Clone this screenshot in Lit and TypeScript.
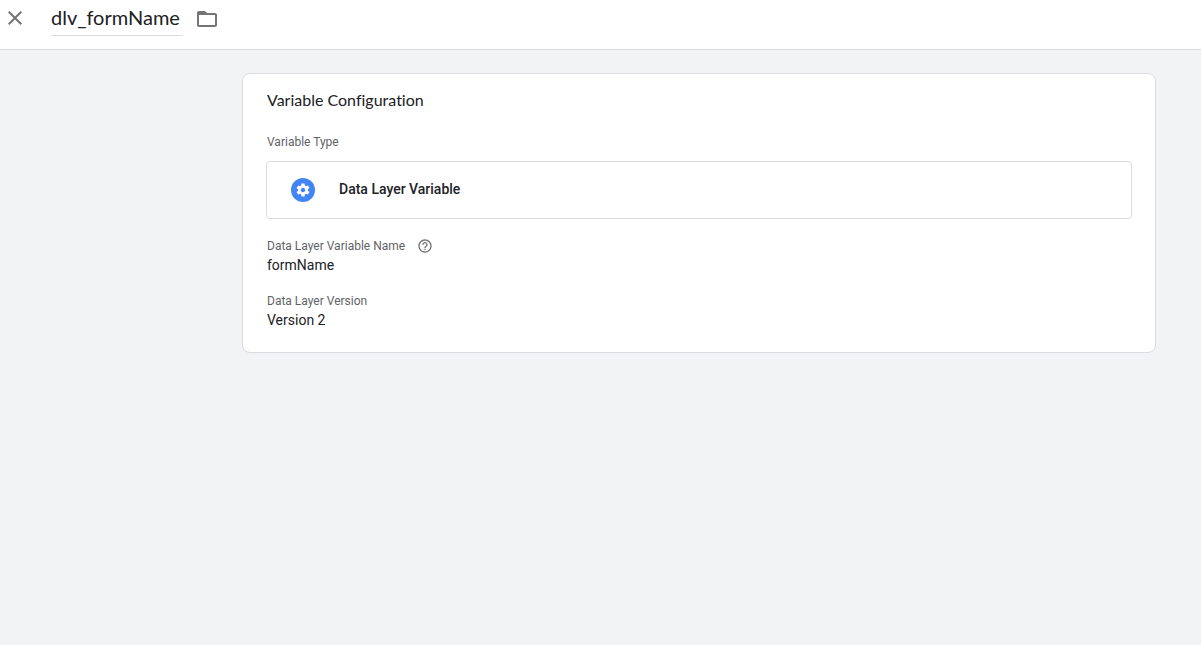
import { LitElement, html, css } from "lit";
import { customElement, property } from "lit/decorators.js";

@customElement("app-root")
export class AppRoot extends LitElement {
  @property() name = "dlv_formName";

  static styles = css`
    :host {
      display: flex;
      flex-direction: column;
      min-height: 100vh;
      background: #f1f3f4;
      color: #202124;
      font-family: Roboto, "Liberation Sans", sans-serif;
      font-size: 14px;
      line-height: 20px;
    }
    * {
      box-sizing: border-box;
    }
    svg {
      display: block;
      fill: currentColor;
    }
    button {
      margin: 0;
      padding: 0;
      border: 0;
      background: none;
      color: #757575;
      font: inherit;
      cursor: pointer;
    }
    .bar {
      display: flex;
      align-items: flex-start;
      height: 50px;
      padding: 6px 3px;
      background: #fff;
      border-bottom: 1px solid #dadce0;
    }
    .title {
      field-sizing: content;
      min-width: 132px;
      height: 30px;
      margin: 0 12px 0 24px;
      padding: 0 0 7px;
      border: 0;
      border-bottom: 1px solid #dadce0;
      outline: none;
      background: none;
      color: #202124;
      font-family: Lato, Roboto, sans-serif;
      font-size: 20px;
      line-height: 22px;
    }
    .bar button svg {
      width: 24px;
      height: 24px;
    }
    .content {
      padding: 23px 45px 24px 242px;
    }
    .card {
      padding: 14px 23px 22px;
      background: #fff;
      border: 1px solid #dadce0;
      border-radius: 8px;
    }
    h2 {
      margin: 0 0 22px;
      padding-left: 1px;
      font-family: Lato, Roboto, sans-serif;
      font-size: 16px;
      font-weight: 400;
      font-variant-ligatures: none;
      line-height: 24px;
    }
    .label {
      display: flex;
      align-items: center;
      gap: 12px;
      height: 16px;
      padding-left: 1px;
      color: #5f6368;
      font-size: 12px;
      line-height: 16px;
    }
    .type {
      display: flex;
      align-items: center;
      gap: 24px;
      width: 100%;
      height: 58px;
      margin: 11px 0 19px;
      padding: 0 24px;
      border: 1px solid #dadce0;
      border-radius: 4px;
      color: #202124;
      font-weight: 500;
      text-align: left;
    }
    .type span {
      padding-bottom: 2px;
    }
    dl,
    dd {
      margin: 0;
    }
    dd {
      padding: 1px 0 0 1px;
    }
    .field + .field {
      margin-top: 18px;
    }
  `;

  private rename(e: Event) {
    this.name = (e.target as HTMLInputElement).value;
  }

  render() {
    return html`
      <header class="bar">
        <button type="button" aria-label="Close">
          <svg viewBox="0 0 24 24">
            <path d="M19 6.41 17.59 5 12 10.59 6.41 5 5 6.41 10.59 12 5 17.59 6.41 19 12 13.41 17.59 19 19 17.59 13.41 12z" />
          </svg>
        </button>
        <input class="title" type="text" aria-label="Variable name" spellcheck="false" .value=${this.name} @input=${this.rename} />
        <button type="button" aria-label="Move to folder">
          <svg viewBox="0 0 24 24">
            <path d="M20 7h-8l-2-2H4c-1.100 0-1.990.9-1.990 2L2 19c0 1.100.9 2 2 2h16c1.100 0 2-.9 2-2V9c0-1.100-.9-2-2-2zm0 12H4V9h16v10z" />
          </svg>
        </button>
      </header>
      <main class="content">
        <section class="card">
          <h2>Variable Configuration</h2>
          <div class="label" id="type-label">Variable Type</div>
          <button class="type" type="button" aria-describedby="type-label">
            <svg width="24" height="24" viewBox="0 0 24 24">
              <circle cx="12" cy="12" r="12" fill="#4285f4" />
              <path
                fill="#fff"
                transform="translate(4.200 4.200) scale(.65)"
                d="M19.430 12.980c.04-.32.07-.64.07-.98s-.03-.66-.07-.98l2.110-1.650c.19-.15.24-.42.12-.64l-2-3.460c-.12-.22-.39-.3-.61-.22l-2.490 1c-.52-.4-1.080-.73-1.690-.98l-.38-2.650C14.460 2.180 14.250 2 14 2h-4c-.25 0-.46.18-.49.42l-.38 2.650c-.61.25-1.170.59-1.690.98l-2.490-1c-.23-.09-.49 0-.61.22l-2 3.460c-.13.22-.07.49.12.64l2.110 1.650c-.04.32-.07.65-.07.98s.03.66.07.98l-2.110 1.650c-.19.15-.24.42-.12.64l2 3.460c.12.22.39.3.61.22l2.490-1c.52.4 1.080.73 1.690.98l.38 2.650c.03.24.24.42.49.42h4c.25 0 .46-.18.49-.42l.38-2.650c.61-.25 1.170-.59 1.690-.98l2.490 1c.23.09.49 0 .61-.22l2-3.460c.12-.22.07-.49-.12-.64l-2.110-1.650zM12 15.500c-1.930 0-3.500-1.570-3.500-3.500s1.570-3.500 3.500-3.500 3.500 1.570 3.500 3.500-1.570 3.500-3.500 3.500z"
              />
            </svg>
            <span>Data Layer Variable</span>
          </button>
          <dl>
            <div class="field">
              <dt class="label">
                Data Layer Variable Name
                <button type="button" aria-label="Help">
                  <svg width="16" height="16" viewBox="0 0 24 24">
                    <path d="M11 18h2v-2h-2v2zm1-16C6.480 2 2 6.480 2 12s4.480 10 10 10 10-4.480 10-10S17.520 2 12 2zm0 18c-4.410 0-8-3.590-8-8s3.590-8 8-8 8 3.590 8 8-3.590 8-8 8zm0-14c-2.210 0-4 1.790-4 4h2c0-1.100.9-2 2-2s2 .9 2 2c0 2-3 1.750-3 5h2c0-2.250 3-2.500 3-5 0-2.210-1.790-4-4-4z" />
                  </svg>
                </button>
              </dt>
              <dd>formName</dd>
            </div>
            <div class="field">
              <dt class="label">Data Layer Version</dt>
              <dd>Version 2</dd>
            </div>
          </dl>
        </section>
      </main>
    `;
  }
}
